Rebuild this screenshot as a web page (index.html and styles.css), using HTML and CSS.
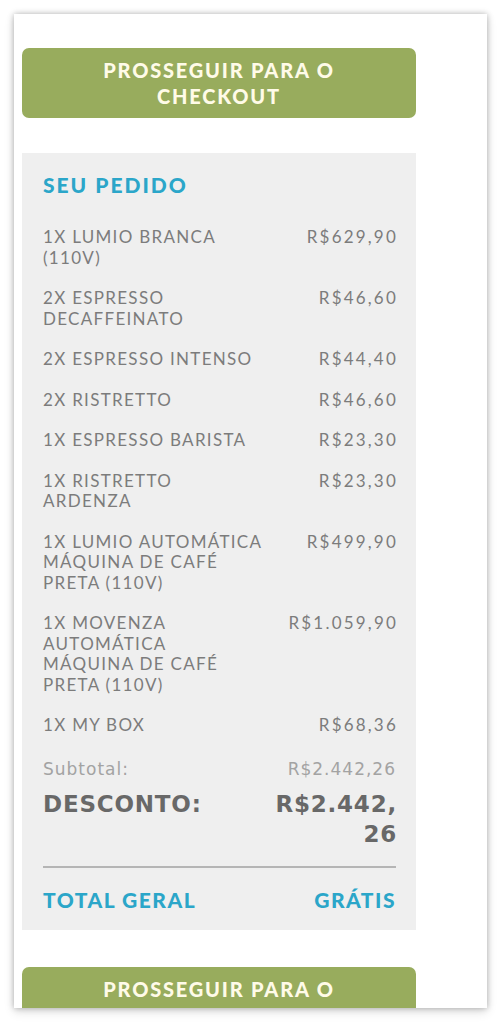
FILE: index.html
```html
<!DOCTYPE html>
<html lang="pt-BR">
<head>
    <meta charset="UTF-8">
    <meta name="viewport" content="width=device-width, initial-scale=1.0">
    <title>Seu pedido</title>
    <link rel="stylesheet" href="styles.css">
</head>
<body>
<div class="frame">
    <div class="column">
        <button class="checkout-btn">PROSSEGUIR PARA O CHECKOUT</button>

        <div class="summary">
            <h2>SEU PEDIDO</h2>
            <ul class="items">
                <li><span class="name">1X LUMIO BRANCA (110V)</span><span class="price">R$629,90</span></li>
                <li><span class="name">2X ESPRESSO DECAFFEINATO</span><span class="price">R$46,60</span></li>
                <li><span class="name">2X ESPRESSO INTENSO</span><span class="price">R$44,40</span></li>
                <li><span class="name">2X RISTRETTO</span><span class="price">R$46,60</span></li>
                <li><span class="name">1X ESPRESSO BARISTA</span><span class="price">R$23,30</span></li>
                <li><span class="name">1X RISTRETTO ARDENZA</span><span class="price">R$23,30</span></li>
                <li><span class="name">1X LUMIO AUTOMÁTICA MÁQUINA DE CAFÉ PRETA (110V)</span><span class="price">R$499,90</span></li>
                <li><span class="name">1X MOVENZA<br>AUTOMÁTICA<br>MÁQUINA DE CAFÉ PRETA (110V)</span><span class="price">R$1.059,90</span></li>
                <li><span class="name">1X MY BOX</span><span class="price">R$68,36</span></li>
            </ul>
            <div class="subtotal">
                <span>Subtotal:</span>
                <span>R$2.442,26</span>
            </div>
            <div class="discount">
                <span>DESCONTO:</span>
                <span class="discount-value">R$2.442,<wbr>26</span>
            </div>
            <div class="total">
                <span>TOTAL GERAL</span>
                <span>GRÁTIS</span>
            </div>
        </div>

        <button class="checkout-btn">PROSSEGUIR PARA O CHECKOUT</button>
    </div>
</div>
</body>
</html>
```

FILE: styles.css
```css
:root {
    --green: #98ac5d;
    --btn-text: #fffbe8;
    --panel-bg: #efefef;
    --item-text: #7c7c7c;
    --blue: #2ba6c9;
}
html, body {
    margin: 0;
    padding: 0;
    background: #ffffff;
}
body {
    padding: 14px 13px 0 14px;
    height: 1023px;
    box-sizing: border-box;
    overflow: hidden;
}
.frame {
    height: 994px;
    background: #ffffff;
    box-shadow: 0 0 6px rgba(0, 0, 0, 0.28), 0 4px 10px rgba(0, 0, 0, 0.12);
    overflow: hidden;
    padding: 34px 0 0 8px;
    box-sizing: border-box;
}
.column {
    width: 394px;
}
.checkout-btn {
    display: block;
    width: 100%;
    height: 70px;
    padding: 0 40px;
    border: none;
    border-radius: 7px;
    background-color: var(--green);
    color: var(--btn-text);
    font-family: Lato, 'Liberation Sans', sans-serif;
    font-weight: 900;
    font-size: 20px;
    letter-spacing: 1.8px;
    line-height: 26px;
    text-align: center;
    cursor: pointer;
}
.summary {
    margin: 35px 0 37px;
    background: var(--panel-bg);
    padding: 20px 20px 18px 21px;
}
.summary h2 {
    margin: 0 0 30px;
    font-family: Lato, 'Liberation Sans', sans-serif;
    font-weight: 900;
    font-size: 21px;
    line-height: 24px;
    letter-spacing: 2px;
    color: var(--blue);
}
.items {
    list-style: none;
    margin: 0;
    padding: 0;
}
.items li {
    display: flex;
    justify-content: space-between;
    align-items: flex-start;
    margin-bottom: 20px;
    font-family: Lato, 'Liberation Sans', sans-serif;
    font-size: 17px;
    line-height: 20.5px;
    letter-spacing: 1.3px;
    color: var(--item-text);
}
.items .name {
    flex: 0 0 222px;
}
.items .price {
    white-space: nowrap;
    letter-spacing: 2.2px;
    margin-right: -2px;
}
.subtotal {
    display: flex;
    justify-content: space-between;
    margin-top: 23px;
    font-family: 'DejaVu Sans', Verdana, sans-serif;
    font-size: 17px;
    line-height: 21px;
    letter-spacing: 1px;
    color: #a3a3a3;
}
.discount {
    display: flex;
    justify-content: space-between;
    align-items: flex-start;
    margin-top: 9px;
    padding-bottom: 17px;
    border-bottom: 2px solid #b5b5b5;
    font-family: 'DejaVu Sans', Verdana, sans-serif;
    font-weight: bold;
    font-size: 23px;
    line-height: 30px;
    letter-spacing: 0.8px;
    color: #686868;
}
.discount-value {
    width: 130px;
    text-align: right;
    margin-right: -1px;
}
.total {
    display: flex;
    justify-content: space-between;
    margin-top: 20px;
    font-family: Lato, 'Liberation Sans', sans-serif;
    font-weight: 900;
    font-size: 21px;
    line-height: 24px;
    letter-spacing: 1.5px;
    color: var(--blue);
}
```
